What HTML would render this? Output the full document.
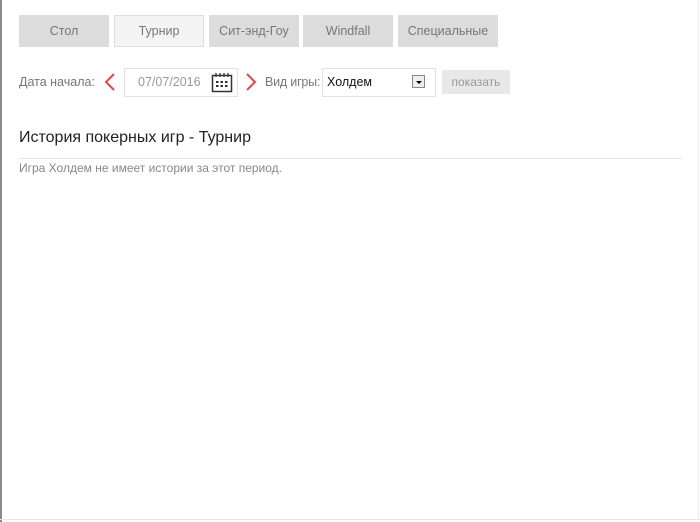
<!DOCTYPE html>
<html><head><meta charset="utf-8"><style>
body{margin:0;width:700px;height:522px;background:#fff;font-family:"Liberation Sans",sans-serif;position:relative;overflow:hidden}
.lb{position:absolute;left:0;top:0;width:2px;height:522px;background:#8a8a8a}
.bb{position:absolute;left:0;top:519px;width:700px;height:1px;background:#e6e6e6}
.rb{position:absolute;left:698px;top:0;width:1px;height:520px;background:#eee}
.t{position:absolute;top:15px;height:32px;line-height:32px;text-align:center;font-size:12.5px;color:#777;background:#dcdcdc}
.a{position:absolute;font-size:12.5px;color:#777}
</style></head><body>
<div class="lb"></div><div class="bb"></div><div class="rb"></div>
<div class="t" style="left:19px;width:90px">Стол</div>
<div class="t" style="left:114px;width:88px;background:#f4f4f4;border:1px solid #ddd;height:30px;line-height:30px">Турнир</div>
<div class="t" style="left:209px;width:90px">Сит-энд-Гоу</div>
<div class="t" style="left:303px;width:90px">Windfall</div>
<div class="t" style="left:398px;width:100px">Специальные</div>

<div class="a" style="left:19px;top:75px">Дата начала:</div>
<svg style="position:absolute;left:103px;top:72px" width="14" height="20"><path d="M11 2 L3 10 L11 18" stroke="#e04848" stroke-width="2" fill="none"/></svg>
<div style="position:absolute;left:124px;top:68px;width:112px;height:27px;border:1px solid #e2e2e2"></div>
<div class="a" style="left:138px;top:75px;color:#999">07/07/2016</div>
<svg style="position:absolute;left:211px;top:72px" width="22" height="21"><rect x="1.5" y="3.5" width="19" height="16" fill="none" stroke="#333" stroke-width="1.5"/><path d="M5 1v4M9 1v4M13 1v4M17 1v4" stroke="#333" stroke-width="1.3"/><g fill="#333"><rect x="5" y="9" width="2.5" height="2"/><rect x="9.5" y="9" width="2.5" height="2"/><rect x="14" y="9" width="2.5" height="2"/><rect x="5" y="13" width="2.5" height="2"/><rect x="9.5" y="13" width="2.5" height="2"/><rect x="14" y="13" width="2.5" height="2"/></g></svg>
<svg style="position:absolute;left:244px;top:72px" width="14" height="20"><path d="M3 2 L11 10 L3 18" stroke="#e04848" stroke-width="2" fill="none"/></svg>
<div class="a" style="left:265px;top:75px;letter-spacing:-0.2px">Вид игры:</div>
<div style="position:absolute;left:322px;top:68px;width:112px;height:27px;border:1px solid #e2e2e2"></div>
<div class="a" style="left:327px;top:75px;color:#111">Холдем</div>
<div style="position:absolute;left:412px;top:75px;width:13px;height:13px;background:#eee;border:1px solid #888;box-sizing:border-box"><div style="position:absolute;left:3px;top:5px;border-left:3px solid transparent;border-right:3px solid transparent;border-top:3px solid #000"></div></div>
<div style="position:absolute;left:442px;top:70px;width:68px;height:24px;line-height:24px;background:#e8e8e8;text-align:center;font-size:12px;color:#999">показать</div>

<div style="position:absolute;left:19px;top:129px;font-size:16px;color:#222">История покерных игр - Турнир</div>
<div style="position:absolute;left:19px;top:158px;width:663px;height:1px;background:#e6e6e6"></div>
<div style="position:absolute;left:19px;top:161px;font-size:12px;color:#888">Игра Холдем не имеет истории за этот период.</div>
</body></html>
